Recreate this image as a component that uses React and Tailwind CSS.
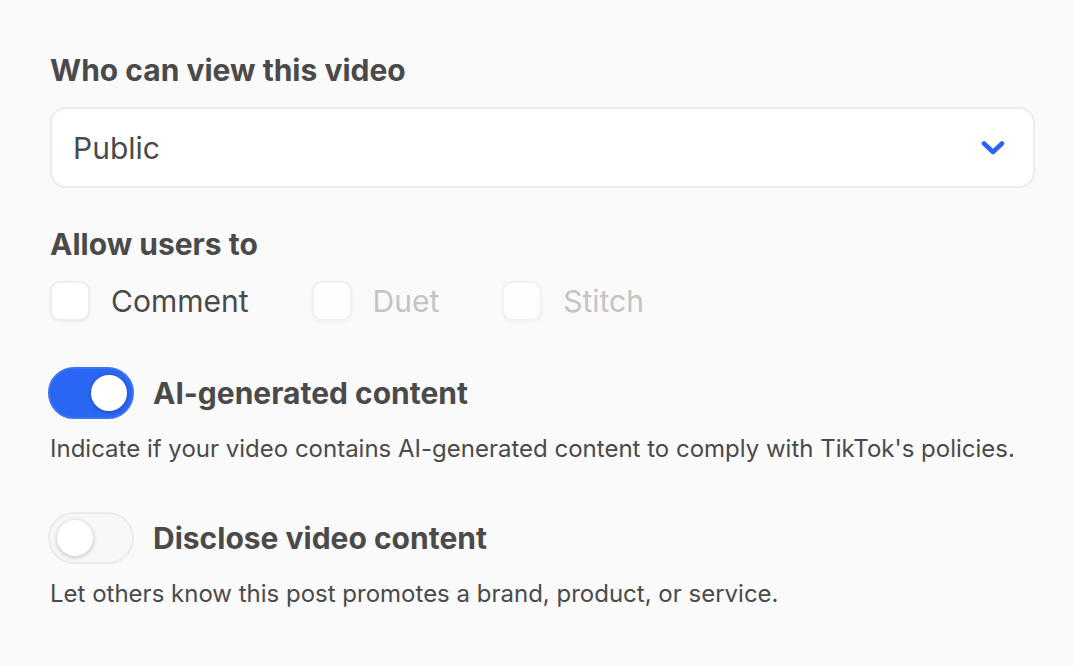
import { useState } from 'react'

function Checkbox({ label, disabled, checked, onChange }) {
  return (
    <label className={`flex items-center gap-[21px] ${disabled ? 'cursor-not-allowed' : 'cursor-pointer'}`}>
      <span
        onClick={() => !disabled && onChange(!checked)}
        className={`w-[40px] h-[40px] rounded-[10px] border-2 border-[#ededed] bg-white shadow-[0_1px_3px_rgba(0,0,0,0.06)] ${disabled ? 'opacity-60' : ''}`}
      />
      <span className={`text-[30px] leading-[40px] ${disabled ? 'text-[#c4c4c4]' : 'text-[#4a4a4a]'}`}>{label}</span>
    </label>
  )
}

function Toggle({ on, onChange }) {
  return (
    <button
      onClick={() => onChange(!on)}
      className={`relative w-[86px] h-[52px] rounded-full border-2 transition-colors ${
        on ? 'bg-[#2a66f4] border-[#3b73f5]' : 'bg-[#f7f7f7] border-[#ebebeb]'
      }`}
    >
      <span
        className={`absolute top-[6px] w-[36px] h-[36px] rounded-full bg-white shadow-[0_1px_4px_rgba(0,0,0,0.25)] ${
          on ? 'left-[41px]' : 'left-[7px]'
        }`}
      />
    </button>
  )
}

export default function App() {
  const [comment, setComment] = useState(false)
  const [ai, setAi] = useState(true)
  const [disclose, setDisclose] = useState(false)

  return (
    <div className="min-h-screen bg-[#fafafa] pl-[50px] pr-[39px] pt-[52px] text-[#4a4a4a]" style={{ fontFamily: 'Inter, "Liberation Sans", sans-serif' }}>
      {/* Visibility */}
      <h2 className="text-[30px] leading-[36px] font-bold">Who can view this video</h2>
      <div className="mt-[19px] h-[81px] rounded-[16px] border-2 border-[#ececec] bg-white flex items-center justify-between pl-[21px] pr-[28px]">
        <span className="text-[30px] pt-[2px]">Public</span>
        <svg width="24" height="16" viewBox="0 0 24 16" fill="none">
          <path d="M3 3.5 L12 12 L21 3.5" stroke="#2a63f5" strokeWidth="4.5" strokeLinecap="round" strokeLinejoin="round" />
        </svg>
      </div>

      {/* Allow users */}
      <h2 className="mt-[38px] text-[30px] leading-[36px] font-bold">Allow users to</h2>
      <div className="mt-[19px] flex items-center gap-[63px]">
        <Checkbox label="Comment" checked={comment} onChange={setComment} />
        <Checkbox label="Duet" disabled />
        <Checkbox label="Stitch" disabled />
      </div>

      {/* AI generated */}
      <div className="mt-[46px] flex items-center gap-[19px] -ml-[2px]">
        <Toggle on={ai} onChange={setAi} />
        <span className="text-[30px] font-bold">AI-generated content</span>
      </div>
      <p className="mt-[15px] text-[24px] leading-[30px]">
        Indicate if your video contains AI-generated content to comply with TikTok's policies.
      </p>

      {/* Disclose */}
      <div className="mt-[48px] flex items-center gap-[19px] -ml-[2px]">
        <Toggle on={disclose} onChange={setDisclose} />
        <span className="text-[30px] font-bold">Disclose video content</span>
      </div>
      <p className="mt-[15px] text-[24px] leading-[30px]">
        Let others know this post promotes a brand, product, or service.
      </p>
    </div>
  )
}
